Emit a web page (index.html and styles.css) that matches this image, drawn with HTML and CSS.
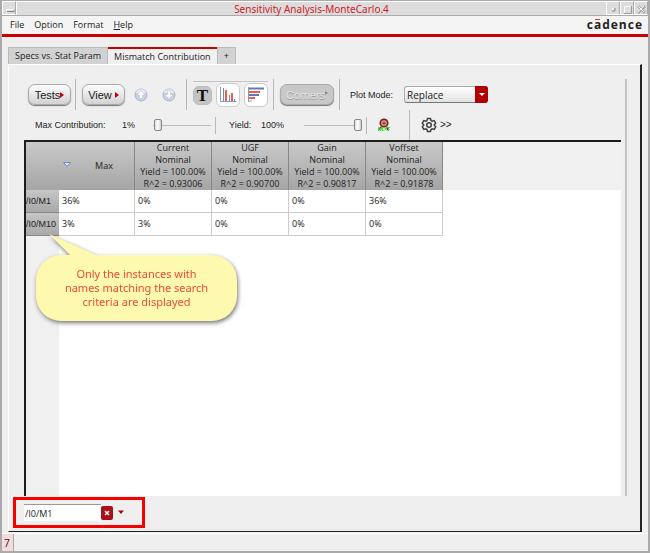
FILE: index.html
```html
<!DOCTYPE html>
<html lang="en">
<head>
<meta charset="utf-8">
<title>Sensitivity Analysis-MonteCarlo.4</title>
<link rel="stylesheet" href="styles.css">
</head>
<body>
<header class="titlebar">
  <button class="winbtn" aria-label="Window menu"><svg width="14" height="14"><path d="M4 9.500h7V7.500" fill="none" stroke="#888"/><path d="M3.500 9V7.500H11" fill="none" stroke="#fff"/></svg></button>
  <h1 class="title">Sensitivity Analysis-MonteCarlo.4</h1>
  <button class="winbtn" aria-label="Minimize"><svg width="13" height="14"><path d="M5 9h3V6" fill="none" stroke="#888"/><path d="M5.500 8V6.500H7" fill="none" stroke="#fff"/></svg></button>
  <button class="winbtn" aria-label="Maximize"><svg width="13" height="14"><path d="M3 11.500h7.500V4" fill="none" stroke="#999"/><path d="M3.500 11V4.500H10" fill="none" stroke="#fff"/></svg></button>
  <button class="winbtn" aria-label="Close"><svg width="13" height="14"><path d="M3 4l7 7M10 4l-7 7" stroke="#aaa" stroke-width="2.500"/><path d="M3 4l6 6M9 4l-6 6" stroke="#f8f8f8"/></svg></button>
</header>
<nav class="menubar">
  <a href="#">File</a><a href="#">Option</a><a href="#">Format</a><a href="#"><u>H</u>elp</a>
  <span class="logo">c<span class="logo-a">a</span>dence</span>
</nav>
<main class="workspace">
  <div class="tabs" role="tablist">
    <button class="tab" role="tab">Specs vs. Stat Param</button>
    <button class="tab active" role="tab" aria-selected="true">Mismatch Contribution</button>
    <button class="tab" role="tab" aria-label="Add tab">+</button>
  </div>
  <section class="panel">
    <div class="content">
      <div class="toolbar">
        <button class="btn tests">Tests<i class="caret"></i></button>
        <i class="sep"></i>
        <button class="btn view">View<i class="caret gap"></i></button>
        <button class="round" aria-label="Previous"><svg width="14" height="14" viewBox="0 0 14 14"><circle cx="7" cy="7" r="6" fill="#c8d0e2" stroke="#a9b4cc"/><path d="M2 5a5.200 5.200 0 0110 0" fill="#e8ecf5"/><path d="M7 2.500L11 7H8.500v3.500h-3V7H3z" fill="#fff" stroke="#b4bdd4" stroke-width=".5"/></svg></button>
        <button class="round" aria-label="Next"><svg width="14" height="14" viewBox="0 0 14 14"><circle cx="7" cy="7" r="6" fill="#c8d0e2" stroke="#a9b4cc"/><path d="M2 5a5.200 5.200 0 0110 0" fill="#e8ecf5"/><path d="M7 11L3 6.500h2.500V3h3v3.500H11z" fill="#fff" stroke="#b4bdd4" stroke-width=".5"/></svg></button>
        <i class="sep"></i>
        <div class="views">
          <button class="tile text" aria-label="Text view">T</button>
          <button class="tile" aria-label="Column chart"><svg width="18" height="18"><path d="M1.500 1v14.500h16" fill="none" stroke="#8898b5"/><path d="M4.500 2v13M10.500 9v6M15.500 13v2" stroke="#7085c0"/><path d="M7 4v11M13 7v8" stroke="#ef5c48" stroke-width="2"/></svg></button>
          <button class="tile" aria-label="Bar chart"><svg width="18" height="18"><path d="M1.500 1v15" stroke="#8898b5"/><path d="M2 2.500h15M2 9h10" stroke="#6078b4" stroke-width="2"/><path d="M2 6h11M2 12h6" stroke="#ee5948" stroke-width="2"/><path d="M2 15h3" stroke="#91a0c4"/></svg></button>
        </div>
        <i class="sep"></i>
        <button class="btn corners" disabled>Corners<i class="caret"></i></button>
        <i class="sep"></i>
        <label class="plot-label" for="mode">Plot Mode:</label>
        <span class="select"><select id="mode"><option>Replace</option></select><i class="drop"></i></span>
      </div>
      <div class="toolbar second">
        <label class="max-label" for="max">Max Contribution:</label><span class="value">1%</span>
        <input id="max" class="slider" type="range" min="0" max="100" value="1">
        <i class="sep short"></i>
        <label class="yield-label" for="yield">Yield:</label><span class="value yield-value">100%</span>
        <input id="yield" class="slider" type="range" min="0" max="100" value="100">
        <i class="sep short"></i>
        <button class="round next" aria-label="Next point"><svg width="14" height="14"><circle cx="7" cy="5" r="3.700" fill="#d7b0ac" stroke="#8c1816" stroke-width="1.700"/><circle cx="7" cy="5" r="1.600" fill="#8b211b"/><path d="M4 9L2.500 12M10 9l1.500 3" stroke="#711" stroke-width="2"/><path d="M1.500 13V9.500l2 3V9.500M6.500 9.500h-1.500v3h1.500M5 11h1M7.500 9.500l2 3M9.500 9.500l-2 3M10 9.500h3M11.500 9.500v3.500" fill="none" stroke="#27e927"/><path d="M6 4.500h2" stroke="#36ab29"/></svg></button>
        <i class="sep tall"></i>
        <button class="round gear" aria-label="Settings"><svg width="16" height="16" viewBox="0 0 16 16" fill="none" stroke="#424242" stroke-width="1.500"><path d="M6.500 1.500h3l.5 2 1.200.7 2-.6 1.500 2.600L13.200 8l1.500 1.800-1.500 2.600-2-.6-1.200.7-.5 2h-3l-.5-2-1.200-.7-2 .6-1.500-2.600L2.800 8 1.300 6.200l1.500-2.600 2 .6L6 3.500z"/><circle cx="8" cy="8" r="2.300"/></svg></button>
        <span class="more">&gt;&gt;</span>
      </div>
      <div class="grid-area">
        <table>
          <colgroup><col class="c-name"><col class="c-max"><col><col><col><col></colgroup>
          <thead><tr>
            <th class="corner"></th>
            <th class="max"><svg class="sort" width="8" height="6"><path d="M.5.500h7L4 4.500z" fill="#dde6ff" stroke="#6c8bd0"/></svg>Max</th>
            <th>Current<br>Nominal<br>Yield = 100.00%<br>R^2 = 0.93006</th>
            <th>UGF<br>Nominal<br>Yield = 100.00%<br>R^2 = 0.90700</th>
            <th>Gain<br>Nominal<br>Yield = 100.00%<br>R^2 = 0.90817</th>
            <th>Voffset<br>Nominal<br>Yield = 100.00%<br>R^2 = 0.91878</th>
          </tr></thead>
          <tbody>
            <tr><th>/I0/M1</th><td>36%</td><td>0%</td><td>0%</td><td>0%</td><td>36%</td></tr>
            <tr><th>/I0/M10</th><td>3%</td><td>3%</td><td>0%</td><td>0%</td><td>0%</td></tr>
          </tbody>
        </table>
        <aside class="callout">
          <svg class="tail" width="54" height="24" viewBox="0 0 54 24"><path d="M0 0L23 23H52z" fill="#fdf9ae"/></svg>
          Only the instances with<br>names matching the search<br>criteria are displayed
        </aside>
      </div>
    </div>
    <form class="search">
      <input type="text" aria-label="Search instances" value="/I0/M1">
      <button type="button" class="clear" aria-label="Clear"><svg width="12" height="14"><path d="M4 5l4 4M8 5l-4 4" stroke="#fff" stroke-width="1.500"/></svg></button>
      <button type="button" class="round" aria-label="Search options"><svg width="7" height="5"><path d="M0 .500h6L3 4z" fill="#b40000"/></svg></button>
    </form>
  </section>
</main>
<footer class="status"><span>7</span></footer>
</body>
</html>
```
FILE: styles.css
```css
* { box-sizing: border-box; }
body {
  margin: 0;
  min-height: 100vh;
  display: flex;
  flex-direction: column;
  background: #efefef;
  border: solid #aaa;
  border-width: 1px 2px 2px;
  color: #222;
  font: 9px/12px "Open Sans", "Noto Sans", sans-serif;
}
button, input, select { font: inherit; color: inherit; margin: 0; padding: 0; }
button { border: 0; background: none; }
svg { display: block; }
.titlebar {
  display: flex;
  height: 15px;
  background: #dcdcdc;
  border-bottom: 1px solid #aaa;
}
.title {
  flex: 1;
  margin: 0;
  color: #d02028;
  font: 10px/14px "Noto Sans", sans-serif;
  text-align: center;
  border: solid #fff;
  border-width: 1px 0 0 1px;
}
.winbtn {
  width: 14px;
  border: 1px solid #fff;
  border-right-color: #aaa;
  overflow: hidden;
}
.menubar {
  display: flex;
  align-items: center;
  gap: 10px;
  height: 21px;
  padding: 0 5px 1px 8px;
  background: #f4f4f4;
  border-bottom: 3px solid #cb0000;
}
.menubar a { color: inherit; text-decoration: none; }
.logo {
  margin-left: auto;
  color: #222;
  font: bold 12px/14px "Open Sans", sans-serif;
  letter-spacing: 1px;
}
.logo-a { position: relative; }
.logo-a::before {
  content: "";
  position: absolute;
  left: 1px;
  top: 3px;
  width: 5px;
  height: 1px;
  background: #e33;
}
.workspace { flex: 1; display: flex; flex-direction: column; padding: 10px 6px 1px; }
.tabs { display: flex; height: 17px; }
.tab {
  padding: 0 6px;
  background: #d2d2d2;
  border: 1px solid #bbb;
  border-bottom: 0;
}
.tab.active { background: #f0f0f0; border-width: 2px 0 0; border-top-color: #cb0000; }
.panel {
  flex: 1;
  display: flex;
  flex-direction: column;
  border: solid #222;
  border-width: 1px 2px 1px 1px;
  border-top-color: #fff;
  border-left-color: #fff;
}
.content {
  flex: 1;
  display: flex;
  flex-direction: column;
  margin: 14px 13px 0 15px;
  padding-right: 4px;
  border-right: 2px solid #c4c4c4;
}
.toolbar {
  display: flex;
  align-items: center;
  height: 31px;
  padding-left: 4px;
  font-family: "Liberation Sans", sans-serif;
}
.second { height: 30px; padding: 0 0 0 11px; }
.sep { width: 1px; height: 31px; background: #b8b8b8; }
.sep.short { height: 17px; }
.sep.tall { height: 30px; }
.btn {
  display: flex;
  align-items: center;
  justify-content: center;
  width: 43px;
  height: 21px;
  border: 1px solid #aaa;
  border-radius: 7px;
  background: linear-gradient(#fdfdfd, #d2d2d2);
  box-shadow: 0 1px 1px #777;
  font-size: 11px;
}
.tests { margin-right: 4px; }
.view { margin: 0 9px 0 6px; }
.caret { border: 3px solid transparent; border-left: 4px solid #c00000; border-right: 0; }
.caret.gap { margin-left: 3px; }
.round { display: block; }
.round + .round { margin: 0 10px 0 14px; }
.views {
  display: flex;
  align-items: center;
  gap: 4px;
  height: 28px;
  margin: 0 5px 0 6px;
  border-top: 1px solid #c4c4c4;
}
.tile {
  display: grid;
  place-items: center;
  width: 24px;
  height: 24px;
  border: 1px solid #ccc;
  border-radius: 6px;
  background: #fff;
}
.tile.text {
  width: 19px;
  height: 19px;
  border-color: #bbb;
  background: #c4c4c4;
  color: #111;
  font: bold 17px/17px "Liberation Serif", serif;
}
.corners { width: 54px; margin: 0 5px 0 6px; background: #c8c8c8; color: #e4e4e4; text-shadow: 0 1px 0 #999; }
.corners .caret { border-width: 2px 0 2px 3px; border-left-color: #888; margin-bottom: 4px; }
.plot-label { margin: 0 11px 0 10px; }
.select { position: relative; width: 84px; height: 17px; }
.select select {
  width: 100%;
  height: 17px;
  appearance: none;
  padding-left: 2px;
  border: 1px solid #aaa;
  border-bottom-color: #777;
  border-radius: 3px;
  background: linear-gradient(#fff, #e2e2e2);
  font: 10px "Open Sans", sans-serif;
}
.drop {
  position: absolute;
  top: 0;
  right: 0;
  width: 13px;
  height: 17px;
  border-radius: 0 3px 3px 0;
  background: #b00000;
  pointer-events: none;
}
.drop::after {
  content: "";
  position: absolute;
  top: 7px;
  left: 4px;
  border: 3px solid transparent;
  border-top-color: #fff;
  border-bottom: 0;
}
.max-label { width: 87px; }
.value { width: 31px; }
.slider { appearance: none; width: 58px; height: 14px; margin-right: 4px; background: linear-gradient(#bbb, #bbb) center / 100% 1px no-repeat; }
.slider::-webkit-slider-thumb {
  appearance: none;
  width: 8px;
  height: 12px;
  border: 1px solid #888;
  border-radius: 2px;
  background: linear-gradient(90deg, #ddd, #fff, #ccc);
}
.yield-label { width: 32px; margin-left: 13px; }
.yield-value { width: 43px; }
.next { margin: 0 18px 0 10px; }
.gear { margin: 0 3px 0 11px; }
.more { font-size: 10px; }
.grid-area {
  position: relative;
  flex: 1;
  border: solid #1c1c1c;
  border-width: 2px 0 0 2px;
  background: linear-gradient(90deg, #f0f0f0 33px, #fff 33px);
}
.grid-area::before {
  content: "";
  position: absolute;
  inset: 0 0 auto 33px;
  height: 48px;
  background: #f0f0f0;
}
table { position: relative; width: 417px; border-collapse: separate; border-spacing: 0; table-layout: fixed; }
.c-name { width: 33px; }
.c-max { width: 76px; }
th, td { padding: 0; font-weight: normal; }
thead th { height: 48px; background: linear-gradient(#c9c9c9, #a5a5a5); border-right: 1px solid #888; }
thead .corner { border-right: 0; }
thead .max { padding-left: 15px; }
.sort { position: absolute; left: 37px; top: 20px; }
tbody th { height: 23px; background: linear-gradient(#c6c6c6, #a8a8a8); border-bottom: 1px solid #888; text-align: left; font-family: "Liberation Sans", "Noto Sans", sans-serif; white-space: nowrap; }
td { padding-left: 3px; background: #fff; border: solid #ccc; border-width: 0 1px 1px 0; }
.callout {
  position: absolute;
  left: 10px;
  top: 113px;
  width: 201px;
  padding: 12px 4px;
  border-radius: 25px;
  background: #fdf9ae;
  color: #ee4b3a;
  font: 11px/14px "Noto Sans", sans-serif;
  text-align: center;
  filter: drop-shadow(1px 2px 2px #777);
}
.tail { position: absolute; left: 13px; top: -21px; }
.search {
  display: flex;
  align-items: center;
  align-self: flex-start;
  width: 132px;
  height: 31px;
  margin: 1px 0 3px 4px;
  padding-left: 8px;
  border: 3px solid #f60000;
}
.search input {
  width: 77px;
  height: 17px;
  padding-left: 1px;
  border: 0;
  border-top: 1px solid #999;
  background: #fff;
}
.clear { width: 12px; height: 14px; margin-right: 5px; border-radius: 2px; background: #a91018; }
.status {
  display: flex;
  height: 18px;
  border-top: 1px solid #fff;
}
.status span { width: 12px; padding: 3px 2px; background: #f8dada; border-right: 1px solid #aaa; font-size: 10px; }
```
